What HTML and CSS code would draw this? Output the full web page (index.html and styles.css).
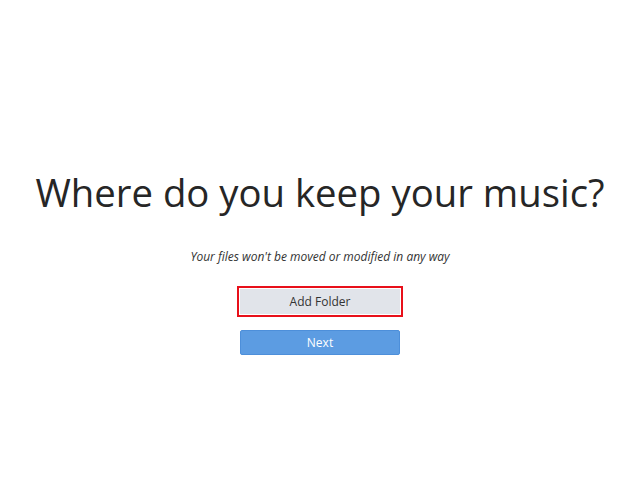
FILE: index.html
```html
<!DOCTYPE html>
<html lang="en">
<head>
    <meta charset="UTF-8" />
    <title>Where do you keep your music?</title>
    <link rel="stylesheet" href="styles.css">
</head>
<body>
    <main class="setup">
        <h1>Where do you keep your music?</h1>
        <p class="note">Your files won't be moved or modified in any way</p>
        <div class="actions">
            <button class="btn btn-add">Add Folder</button>
            <button class="btn btn-next">Next</button>
        </div>
    </main>
</body>
</html>
```

FILE: styles.css
```css
* {
    margin: 0;
    padding: 0;
    box-sizing: border-box;
}

body {
    font-family: 'Open Sans', sans-serif;
    background: #ffffff;
    color: #2a2a2a;
}

.setup {
    display: flex;
    flex-direction: column;
    align-items: center;
    padding-top: 162px;
}

h1 {
    font-size: 38.3px;
    font-weight: 400;
    line-height: 60px;
    white-space: nowrap;
    color: #262626;
}

.note {
    margin-top: 26px;
    font-size: 12px;
    font-style: italic;
    color: #333333;
}

.actions {
    display: flex;
    flex-direction: column;
    align-items: center;
    gap: 16px;
    margin-top: 24px;
}

.btn {
    width: 160px;
    height: 25px;
    border: none;
    border-radius: 2px;
    font-family: 'Open Sans', sans-serif;
    font-size: 12px;
    cursor: pointer;
}

.btn-add {
    background: #e1e4ea;
    color: #333333;
    border-radius: 0;
    outline: 2px solid #e8101a;
    outline-offset: 1px;
}

.btn-next {
    background: #5c9ce2;
    color: #ffffff;
    border: 1px solid #4d8fda;
}
```
